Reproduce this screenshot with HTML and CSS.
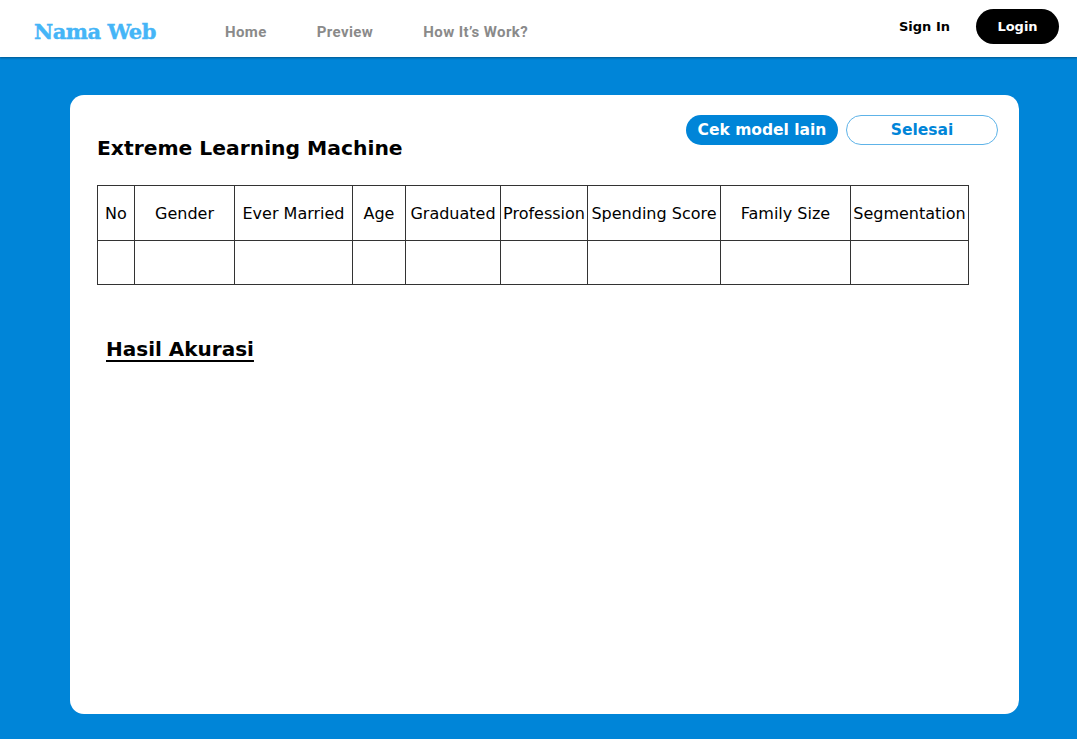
FILE: index.html
```
<!DOCTYPE html>
<html>
<head>
<meta charset="utf-8">
<link rel="stylesheet" href="styles.css">
</head>
<body>
<header class="topbar">
  <div class="brand">Nama Web</div>
  <nav class="menu">
    <a class="menu-item">Home</a>
    <a class="menu-item">Preview</a>
    <a class="menu-item">How It’s Work?</a>
  </nav>
  <div class="auth">
    <a class="signin">Sign In</a>
    <a class="login">Login</a>
  </div>
</header>
<main class="stage">
  <section class="card">
    <div class="card-head">
      <h1 class="title">Extreme Learning Machine</h1>
      <div class="actions">
        <button class="btn btn-fill">Cek model lain</button>
        <button class="btn btn-outline">Selesai</button>
      </div>
    </div>
    <table class="data">
      <colgroup>
        <col style="width:37px"><col style="width:100px"><col style="width:118px"><col style="width:53px"><col style="width:95px"><col style="width:87px"><col style="width:133px"><col style="width:130px"><col style="width:118px">
      </colgroup>
      <thead>
        <tr>
          <th>No</th><th>Gender</th><th>Ever Married</th><th>Age</th><th>Graduated</th><th>Profession</th><th>Spending Score</th><th>Family Size</th><th>Segmentation</th>
        </tr>
      </thead>
      <tbody>
        <tr><td></td><td></td><td></td><td></td><td></td><td></td><td></td><td></td><td></td></tr>
      </tbody>
    </table>
    <h2 class="result">Hasil Akurasi</h2>
  </section>
</main>
</body>
</html>
```
FILE: styles.css
```
* { box-sizing: border-box; }
html, body { margin: 0; padding: 0; }
body {
  width: 1077px;
  height: 739px;
  overflow: hidden;
  font-family: "DejaVu Sans", Verdana, sans-serif;
  background: #0085d8;
}
.topbar {
  height: 57px;
  background: #fff;
  display: flex;
  align-items: center;
  padding: 0 18px 0 34px;
  box-shadow: 0 1px 2px rgba(0,0,0,0.35);
  position: relative;
  z-index: 1;
}
.brand {
  font-family: "DejaVu Serif", serif;
  font-weight: bold;
  font-size: 21px;
  color: #45b5f7;
  letter-spacing: -0.5px;
  width: 191px;
  padding-top: 6px;
  -webkit-text-stroke: 0.4px #45b5f7;
}
.menu {
  display: flex;
  gap: 50px;
  flex: 1;
  padding-top: 7px;
}
.menu-item {
  font-family: Roboto, "Liberation Sans", sans-serif;
  font-weight: bold;
  font-size: 15px;
  letter-spacing: 0.4px;
  color: #8a8a8a;
}
.auth {
  display: flex;
  align-items: center;
  gap: 26px;
  margin-top: -4px;
}
.signin {
  font-weight: bold;
  font-size: 13px;
  color: #000;
}
.login {
  background: #000;
  color: #fff;
  font-weight: bold;
  font-size: 13px;
  width: 83px;
  height: 35px;
  border-radius: 18px;
  display: flex;
  align-items: center;
  justify-content: center;
}
.stage {
  padding: 38px 58px 25px 70px;
}
.card {
  background: #fff;
  border-radius: 14px;
  height: 619px;
  padding: 20px 21px 0 27px;
}
.card-head {
  display: flex;
  justify-content: space-between;
  align-items: flex-start;
}
.title {
  margin: 21px 0 0 0;
  font-size: 20.3px;
  font-weight: bold;
  color: #000;
}
.actions {
  display: flex;
  gap: 8px;
}
.btn {
  font-family: "DejaVu Sans", Verdana, sans-serif;
  font-weight: bold;
  font-size: 15.5px;
  height: 30px;
  width: 152px;
  border-radius: 16px;
  padding: 0;
}
.btn-fill {
  background: #0085d8;
  color: #fff;
  border: none;
}
.btn-outline {
  background: #fff;
  color: #0085d8;
  border: 1px solid #5eb3e8;
}
.data {
  margin-top: 25px;
  border-collapse: collapse;
  table-layout: fixed;
  width: 871px;
}
.data th, .data td {
  border: 1px solid #333;
  padding: 0;
  font-weight: normal;
  font-size: 16px;
  color: #000;
  text-align: center;
  white-space: nowrap;
  overflow: hidden;
}
.data th { height: 55px; }
.data td { height: 44px; }
.result {
  margin: 52px 0 0 9px;
  font-size: 20px;
  font-weight: bold;
  text-decoration: underline;
  text-underline-offset: 4px;
}
```
